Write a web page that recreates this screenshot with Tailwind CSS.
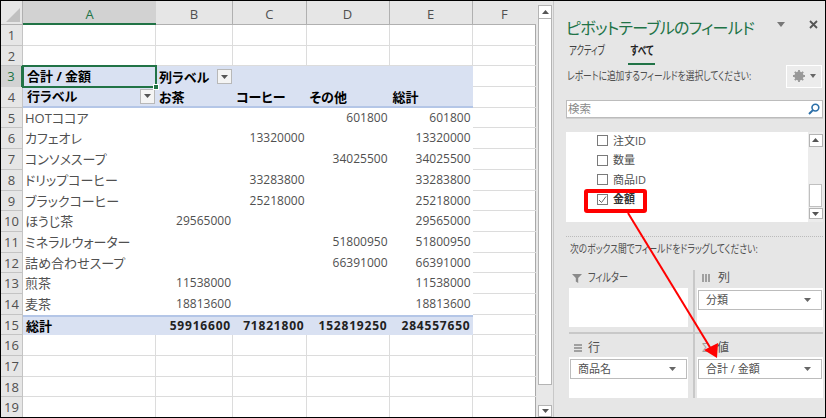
<!DOCTYPE html>
<html lang="ja">
<head>
<meta charset="UTF-8">
<title>ピボットテーブル</title>
<script src="https://cdn.jsdelivr.net/npm/@tailwindcss/browser@4"></script>
</head>
<body class="m-0 overflow-hidden bg-black">
<div class="relative w-[826px] h-[418px] overflow-hidden border-x border-t-[1.5px] border-b-[1.5px] border-black flex bg-[#e6e6e6] font-['Open_Sans','Noto_Sans_CJK_JP',sans-serif] [font-feature-settings:'palt'] text-[12px] text-[#505050]">

  <!-- Sheet -->
  <div class="w-[535px] shrink-0 bg-white grid grid-cols-[22px_133px_77px_73.5px_83px_83px_63.5px] grid-rows-[24px] auto-rows-[20.7px] leading-[20px] border-r border-[#a8a8a8]">
    <!-- column headers -->
    <div class="bg-[#e6e6e6] border-r border-b border-[#b0b0b0] flex items-end justify-end p-[2px]"><svg width="14" height="14" viewBox="0 0 14 14"><path d="M14 0V14H0Z" fill="#c0c0c0"/></svg></div>
    <div class="bg-[#d2d2d2] border-b-2 border-[#217346] text-[#217346] text-[13px] text-center leading-[26px]">A</div>
    <div class="bg-[#e6e6e6] border-r border-b border-[#b0b0b0] text-[13px] text-center leading-[26px]">B</div>
    <div class="bg-[#e6e6e6] border-r border-b border-[#b0b0b0] text-[13px] text-center leading-[26px]">C</div>
    <div class="bg-[#e6e6e6] border-r border-b border-[#b0b0b0] text-[13px] text-center leading-[26px]">D</div>
    <div class="bg-[#e6e6e6] border-r border-b border-[#b0b0b0] text-[13px] text-center leading-[26px]">E</div>
    <div class="bg-[#e6e6e6] border-b border-[#b0b0b0] text-[13px] text-center leading-[26px]">F</div>

    <!-- 1 -->
    <div class="bg-[#e6e6e6] border-r border-b border-[#c4c4c4] text-[13px] text-center">1</div>
    <div class="border-r border-b border-[#dcdcdc]"></div><div class="border-r border-b border-[#dcdcdc]"></div><div class="border-r border-b border-[#dcdcdc]"></div><div class="border-r border-b border-[#dcdcdc]"></div><div class="border-r border-b border-[#dcdcdc]"></div><div class="border-b border-[#dcdcdc]"></div>
    <!-- 2 -->
    <div class="bg-[#e6e6e6] border-r border-b border-[#c4c4c4] text-[13px] text-center">2</div>
    <div class="border-r border-b border-[#dcdcdc]"></div><div class="border-r border-b border-[#dcdcdc]"></div><div class="border-r border-b border-[#dcdcdc]"></div><div class="border-r border-b border-[#dcdcdc]"></div><div class="border-r border-b border-[#dcdcdc]"></div><div class="border-b border-[#dcdcdc]"></div>
    <!-- 3 -->
    <div class="bg-[#d2d2d2] border-r-2 border-[#217346] text-[#217346] text-[13px] text-center">3</div>
    <div class="relative bg-[#d9e1f2] outline-2 -outline-offset-1 outline-[#217346] z-10 pl-[4px] font-bold text-[13px] text-black">合計 / 金額<span class="absolute right-[-3px] bottom-[-3px] w-[6px] h-[6px] bg-[#217346] border border-white"></span></div>
    <div class="bg-[#d9e1f2] col-span-4 pl-[3px] font-bold text-[13px] text-black flex items-center gap-[8px]">列ラベル
      <span class="w-[15px] h-[15px] bg-[#f4f4f4] border border-[#b8b8b8] flex items-center justify-center"><svg width="7" height="4" viewBox="0 0 7 4"><path d="M0 0H7L3.5 4Z" fill="#555"/></svg></span>
    </div>
    <div class="border-b border-[#dcdcdc]"></div>
    <!-- 4 -->
    <div class="bg-[#e6e6e6] border-r border-b border-[#c4c4c4] text-[13px] text-center">4</div>
    <div class="bg-[#d9e1f2] border-b-2 border-[#b4c6e7] pl-[4px] pr-[1px] font-bold text-[13px] text-black flex items-center justify-between">行ラベル
      <span class="w-[15px] h-[15px] bg-[#f4f4f4] border border-[#b8b8b8] flex items-center justify-center"><svg width="7" height="4" viewBox="0 0 7 4"><path d="M0 0H7L3.5 4Z" fill="#555"/></svg></span>
    </div>
    <div class="bg-[#d9e1f2] border-b-2 border-[#b4c6e7] pl-[3px] font-bold text-[13px] text-black">お茶</div>
    <div class="bg-[#d9e1f2] border-b-2 border-[#b4c6e7] pl-[3px] font-bold text-[13px] text-black">コーヒー</div>
    <div class="bg-[#d9e1f2] border-b-2 border-[#b4c6e7] pl-[3px] font-bold text-[13px] text-black">その他</div>
    <div class="bg-[#d9e1f2] border-b-2 border-[#b4c6e7] pl-[3px] font-bold text-[13px] text-black">総計</div>
    <div class="border-b border-[#dcdcdc]"></div>
    <!-- 5 -->
    <div class="bg-[#e6e6e6] border-r border-b border-[#c4c4c4] text-[13px] text-center">5</div>
    <div class="pl-[2px] text-[13px]">HOTココア</div><div></div><div></div><div class="text-right pr-[2px]">601800</div><div class="text-right pr-[2px]">601800</div><div class="border-b border-[#dcdcdc]"></div>
    <!-- 6 -->
    <div class="bg-[#e6e6e6] border-r border-b border-[#c4c4c4] text-[13px] text-center">6</div>
    <div class="pl-[2px] text-[13px]">カフェオレ</div><div></div><div class="text-right pr-[2px]">13320000</div><div></div><div class="text-right pr-[2px]">13320000</div><div class="border-b border-[#dcdcdc]"></div>
    <!-- 7 -->
    <div class="bg-[#e6e6e6] border-r border-b border-[#c4c4c4] text-[13px] text-center">7</div>
    <div class="pl-[2px] text-[13px]">コンソメスープ</div><div></div><div></div><div class="text-right pr-[2px]">34025500</div><div class="text-right pr-[2px]">34025500</div><div class="border-b border-[#dcdcdc]"></div>
    <!-- 8 -->
    <div class="bg-[#e6e6e6] border-r border-b border-[#c4c4c4] text-[13px] text-center">8</div>
    <div class="pl-[2px] text-[13px]">ドリップコーヒー</div><div></div><div class="text-right pr-[2px]">33283800</div><div></div><div class="text-right pr-[2px]">33283800</div><div class="border-b border-[#dcdcdc]"></div>
    <!-- 9 -->
    <div class="bg-[#e6e6e6] border-r border-b border-[#c4c4c4] text-[13px] text-center">9</div>
    <div class="pl-[2px] text-[13px]">ブラックコーヒー</div><div></div><div class="text-right pr-[2px]">25218000</div><div></div><div class="text-right pr-[2px]">25218000</div><div class="border-b border-[#dcdcdc]"></div>
    <!-- 10 -->
    <div class="bg-[#e6e6e6] border-r border-b border-[#c4c4c4] text-[13px] text-center">10</div>
    <div class="pl-[2px] text-[13px]">ほうじ茶</div><div class="text-right pr-[2px]">29565000</div><div></div><div></div><div class="text-right pr-[2px]">29565000</div><div class="border-b border-[#dcdcdc]"></div>
    <!-- 11 -->
    <div class="bg-[#e6e6e6] border-r border-b border-[#c4c4c4] text-[13px] text-center">11</div>
    <div class="pl-[2px] text-[13px]">ミネラルウォーター</div><div></div><div></div><div class="text-right pr-[2px]">51800950</div><div class="text-right pr-[2px]">51800950</div><div class="border-b border-[#dcdcdc]"></div>
    <!-- 12 -->
    <div class="bg-[#e6e6e6] border-r border-b border-[#c4c4c4] text-[13px] text-center">12</div>
    <div class="pl-[2px] text-[13px]">詰め合わせスープ</div><div></div><div></div><div class="text-right pr-[2px]">66391000</div><div class="text-right pr-[2px]">66391000</div><div class="border-b border-[#dcdcdc]"></div>
    <!-- 13 -->
    <div class="bg-[#e6e6e6] border-r border-b border-[#c4c4c4] text-[13px] text-center">13</div>
    <div class="pl-[2px] text-[13px]">煎茶</div><div class="text-right pr-[2px]">11538000</div><div></div><div></div><div class="text-right pr-[2px]">11538000</div><div class="border-b border-[#dcdcdc]"></div>
    <!-- 14 -->
    <div class="bg-[#e6e6e6] border-r border-b border-[#c4c4c4] text-[13px] text-center">14</div>
    <div class="pl-[2px] text-[13px]">麦茶</div><div class="text-right pr-[2px]">18813600</div><div></div><div></div><div class="text-right pr-[2px]">18813600</div><div class="border-b border-[#dcdcdc]"></div>
    <!-- 15 -->
    <div class="bg-[#e6e6e6] border-r border-b border-[#c4c4c4] text-[13px] text-center">15</div>
    <div class="bg-[#d9e1f2] border-t-2 border-[#b4c6e7] pl-[3px] font-bold text-[13px] text-black leading-[18px]">総計</div>
    <div class="bg-[#d9e1f2] border-t-2 border-[#b4c6e7] text-right pr-[2px] font-bold tracking-[0.8px] text-[#222] leading-[18px]">59916600</div>
    <div class="bg-[#d9e1f2] border-t-2 border-[#b4c6e7] text-right pr-[2px] font-bold tracking-[0.8px] text-[#222] leading-[18px]">71821800</div>
    <div class="bg-[#d9e1f2] border-t-2 border-[#b4c6e7] text-right pr-[2px] font-bold tracking-[0.8px] text-[#222] leading-[18px]">152819250</div>
    <div class="bg-[#d9e1f2] border-t-2 border-[#b4c6e7] text-right pr-[2px] font-bold tracking-[0.8px] text-[#222] leading-[18px]">284557650</div>
    <div class="border-b border-[#dcdcdc]"></div>
    <!-- 16 -->
    <div class="bg-[#e6e6e6] border-r border-b border-[#c4c4c4] text-[13px] text-center">16</div>
    <div class="border-r border-b border-[#dcdcdc]"></div><div class="border-r border-b border-[#dcdcdc]"></div><div class="border-r border-b border-[#dcdcdc]"></div><div class="border-r border-b border-[#dcdcdc]"></div><div class="border-r border-b border-[#dcdcdc]"></div><div class="border-b border-[#dcdcdc]"></div>
    <!-- 17 -->
    <div class="bg-[#e6e6e6] border-r border-b border-[#c4c4c4] text-[13px] text-center">17</div>
    <div class="border-r border-b border-[#dcdcdc]"></div><div class="border-r border-b border-[#dcdcdc]"></div><div class="border-r border-b border-[#dcdcdc]"></div><div class="border-r border-b border-[#dcdcdc]"></div><div class="border-r border-b border-[#dcdcdc]"></div><div class="border-b border-[#dcdcdc]"></div>
    <!-- 18 -->
    <div class="bg-[#e6e6e6] border-r border-b border-[#c4c4c4] text-[13px] text-center">18</div>
    <div class="border-r border-b border-[#dcdcdc]"></div><div class="border-r border-b border-[#dcdcdc]"></div><div class="border-r border-b border-[#dcdcdc]"></div><div class="border-r border-b border-[#dcdcdc]"></div><div class="border-r border-b border-[#dcdcdc]"></div><div class="border-b border-[#dcdcdc]"></div>
    <!-- 19 -->
    <div class="bg-[#e6e6e6] border-r border-b border-[#c4c4c4] text-[13px] text-center">19</div>
    <div class="border-r border-b border-[#dcdcdc]"></div><div class="border-r border-b border-[#dcdcdc]"></div><div class="border-r border-b border-[#dcdcdc]"></div><div class="border-r border-b border-[#dcdcdc]"></div><div class="border-r border-b border-[#dcdcdc]"></div><div class="border-b border-[#dcdcdc]"></div>
  </div>

  <!-- Vertical scrollbar -->
  <div class="w-[17px] shrink-0 ml-[1px] bg-[#e8e8e8] pt-[4px] flex flex-col items-center border-r border-[#c8c8c8]">
    <div class="w-[14px] h-[14px] bg-white border border-[#b4b4b4] flex items-center justify-center"><svg width="7" height="4" viewBox="0 0 7 4"><path d="M0 4H7L3.5 0Z" fill="#555"/></svg></div>
    <div class="w-[14px] h-[368px] bg-white border-x border-b border-[#b4b4b4]"></div>
    <div class="w-[14px] h-[12px] mt-[20px] bg-white border border-[#b4b4b4] flex items-center justify-center"><svg width="7" height="4" viewBox="0 0 7 4"><path d="M0 0H7L3.5 4Z" fill="#555"/></svg></div>
  </div>

  <!-- Field pane -->
  <div class="flex-1 min-w-0 pl-[12px] pr-[3px] flex flex-col">
    <div class="flex items-center h-[30px] mt-[12px] text-[#217346] text-[16px] tracking-[-0.7px] leading-none">
      <span class="w-[211px] shrink-0 whitespace-nowrap">ピボットテーブルのフィールド</span>
      <svg width="8" height="5" viewBox="0 0 8 5" class="-mt-[8px]"><path d="M0 0H8L4 5Z" fill="#777"/></svg>
      <svg width="9" height="9" viewBox="0 0 9 9" class="ml-[24px] -mt-[8px]"><path d="M1 1L8 8M8 1L1 8" stroke="#555" stroke-width="1.8"/></svg>
    </div>
    <div class="flex h-[22px] text-[12px] items-start leading-[16px]">
      <span class="w-[62px] pl-[3px] text-[#404040]"><span class="inline-block whitespace-nowrap origin-left scale-x-[0.7]">アクティブ</span></span>
      <span class="w-[27px] font-bold text-[#222] border-b-2 border-[#217346] h-[22px] flex justify-center whitespace-nowrap"><span class="inline-block origin-center scale-x-[0.72]">すべて</span></span>
    </div>
    <div class="flex items-center h-[24px] text-[11.5px] text-[#505050] mt-[-1px]">
      <span class="w-[220px] shrink-0 pl-[1px]"><span class="inline-block whitespace-nowrap origin-left scale-x-[0.76]">レポートに追加するフィールドを選択してください:</span></span>
      <span class="w-[37px] h-[23px] bg-[#ececec] border border-white flex items-center justify-center gap-[5px]">
        <svg width="12" height="12" viewBox="0 0 12 12"><circle cx="6" cy="6" r="3.4" fill="none" stroke="#999" stroke-width="2.4"/><path d="M6 0V12M0 6H12M1.8 1.8L10.2 10.2M10.2 1.8L1.8 10.2" stroke="#999" stroke-width="1.8"/></svg>
        <svg width="6" height="4" viewBox="0 0 6 4"><path d="M0 0H6L3 4Z" fill="#666"/></svg>
      </span>
    </div>
    <div class="w-[257px] h-[18px] mt-[12px] bg-white border border-[#bcbcbc] flex items-center justify-between pl-[1px] pr-[2px] text-[11.5px] text-[#8a8a8a] shadow-[0_1px_0_#d0d0d0]">検索
      <svg width="12" height="12" viewBox="0 0 12 12"><circle cx="7.4" cy="4.6" r="3.4" fill="none" stroke="#2b6fa8" stroke-width="1.6"/><path d="M4.9 7.1L1 11" stroke="#2b6fa8" stroke-width="2"/></svg>
    </div>
    <!-- Field list -->
    <div class="w-[257px] h-[90px] mt-[14px] bg-white flex justify-between shrink-0 overflow-hidden">
      <div class="pl-[31px] flex flex-col text-[11px]">
        <div class="flex items-center gap-[5px] h-[19.5px] -mt-[1px]"><span class="w-[11px] h-[11px] border border-[#7a7a7a]"></span>注文ID</div>
        <div class="flex items-center gap-[5px] h-[19.5px]"><span class="w-[11px] h-[11px] border border-[#7a7a7a]"></span>数量</div>
        <div class="flex items-center gap-[5px] h-[19.5px]"><span class="w-[11px] h-[11px] border border-[#7a7a7a]"></span>商品ID</div>
        <div class="flex items-center gap-[5px] h-[19.5px] font-bold text-[#333]"><span class="w-[11px] h-[11px] border border-[#7a7a7a] flex items-center justify-center"><svg width="9" height="9" viewBox="0 0 9 9"><path d="M1 5L3.5 7.5L8 1.5" fill="none" stroke="#666" stroke-width="1"/></svg></span>金額</div>
      </div>
      <div class="w-[15px] bg-[#ececec] flex flex-col items-center pt-[2px] pb-[3px]">
        <div class="w-[14px] h-[13px] bg-white border border-[#b4b4b4] flex items-center justify-center"><svg width="7" height="4" viewBox="0 0 7 4"><path d="M0 4H7L3.5 0Z" fill="#555"/></svg></div>
        <div class="w-[13px] h-[24px] mt-[37px] bg-white border border-[#c0c0c0]"></div>
        <div class="w-[14px] h-[11px] mt-[1px] bg-white border border-[#b4b4b4] flex items-center justify-center"><svg width="7" height="4" viewBox="0 0 7 4"><path d="M0 0H7L3.5 4Z" fill="#555"/></svg></div>
      </div>
    </div>
    <div class="w-[257px] mt-[14px] border-t border-dotted border-[#bbbbbb]"></div>
    <div class="h-[20px] pl-[4px] mt-[2px] text-[11.5px] leading-[20px] text-[#505050]"><span class="inline-block whitespace-nowrap origin-left scale-x-[0.76]">次のボックス間でフィールドをドラッグしてください:</span></div>
    <!-- Areas -->
    <div class="w-[257px] ml-[3px] mt-[11px] grid grid-cols-[126px_128px] grid-rows-[64px_64px] text-[11px]">
      <div class="border-r-2 border-b-2 border-[#c8c8c8] pr-[5px] pb-[5px] flex flex-col">
        <div class="h-[18px] flex items-center gap-[6px] pl-[3px] text-[#505050] -mt-[1px]"><svg width="10" height="10" viewBox="0 0 10 10"><path d="M0 1H10L6.2 5V10L3.8 8.5V5Z" fill="#8a8a8a"/></svg><span class="inline-block whitespace-nowrap origin-left scale-x-[0.76] text-[12px]">フィルター</span></div>
        <div class="flex-1 bg-white mt-[1px]"></div>
      </div>
      <div class="border-b-2 border-[#c8c8c8] pl-[2px] pb-[5px] flex flex-col">
        <div class="h-[18px] flex items-center gap-[6px] pl-[5px] text-[12px] -mt-[1px]"><svg width="10" height="10" viewBox="0 0 10 10"><path d="M0 1H2V9H0ZM3 1H5V9H3ZM6 1H8V9H6Z" fill="#a0a0a0"/></svg>列</div>
        <div class="flex-1 bg-white pt-[2px] mt-[1px]">
          <div class="h-[20px] mx-[1px] bg-white border border-[#bcbcbc] flex items-center justify-between pl-[7px] pr-[10px]">分類<svg width="7" height="4" viewBox="0 0 7 4"><path d="M0 0H7L3.5 4Z" fill="#666"/></svg></div>
        </div>
      </div>
      <div class="border-r-2 border-[#c8c8c8] pr-[5px] pt-[5px] flex flex-col">
        <div class="h-[18px] flex items-center gap-[5px] pl-[4px] text-[12px]"><svg width="10" height="10" viewBox="0 0 10 10"><path d="M1 1H9V3H1ZM1 4H9V6H1ZM1 7H9V9H1Z" fill="#a0a0a0"/></svg>行</div>
        <div class="flex-1 bg-white pt-[2px]">
          <div class="h-[20px] mx-[1px] bg-white border border-[#bcbcbc] flex items-center justify-between pl-[7px] pr-[10px]">商品名<svg width="7" height="4" viewBox="0 0 7 4"><path d="M0 0H7L3.5 4Z" fill="#666"/></svg></div>
        </div>
      </div>
      <div class="pl-[2px] pt-[5px] flex flex-col">
        <div class="h-[18px] flex items-center gap-[5px] pl-[5px] text-[12px]"><span class="w-[10px] text-[#a0a0a0] leading-none">Σ</span>値</div>
        <div class="flex-1 bg-white pt-[2px]">
          <div class="h-[20px] mx-[1px] bg-white border border-[#bcbcbc] flex items-center justify-between pl-[7px] pr-[10px]">合計 / 金額<svg width="7" height="4" viewBox="0 0 7 4"><path d="M0 0H7L3.5 4Z" fill="#666"/></svg></div>
        </div>
      </div>
    </div>
  </div>

  <!-- Annotation overlays -->
  <div class="absolute left-[583px] top-[188px] w-[63px] h-[23.5px] border-[4px] border-[#ff0000] rounded-[3px]"></div>
  <svg class="absolute left-[-1px] top-[-1.5px] pointer-events-none" width="826" height="418" viewBox="0 0 826 418">
    <path d="M628 213L711 349" stroke="#ff0000" stroke-width="2" fill="none"/>
    <path d="M717 358L704 350L718 343Z" fill="#ff0000"/>
  </svg>
</div>
</body>
</html>
